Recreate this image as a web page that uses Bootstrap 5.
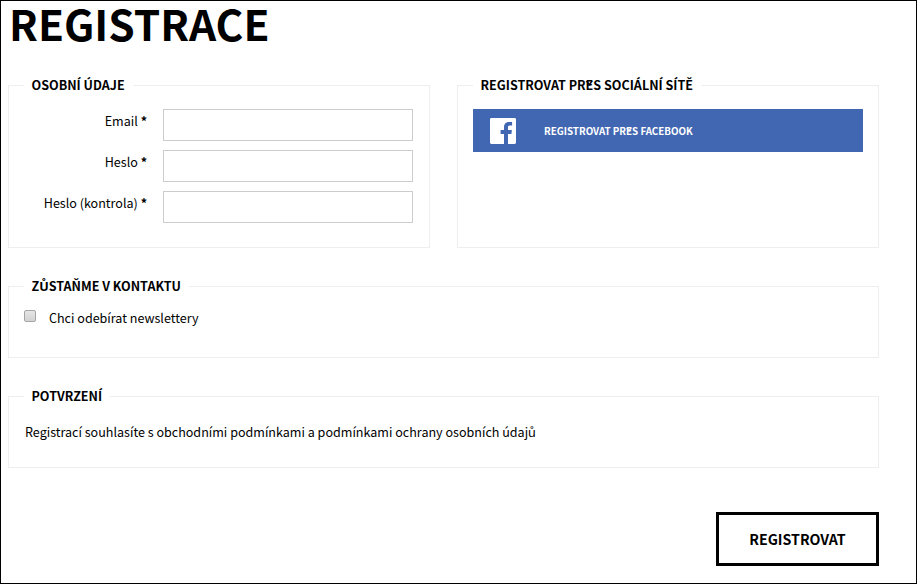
<!DOCTYPE html>
<html lang="cs">
<head>
<meta charset="utf-8">
<title>Registrace</title>
<link href="https://cdn.jsdelivr.net/npm/bootstrap@5.3.0/dist/css/bootstrap.min.css" rel="stylesheet">
<style>
html, body { height: 584px; overflow: hidden; }
body { font-family: "Noto Sans CJK SC", "Noto Sans", sans-serif; font-size: 12.55px; line-height: 20px; color: #000; background: #fff; }
.pg-frame { height: 584px; border: 1px solid #000; padding: 0 37px 0 7px; }
.pg-title { font-size: 42.4px; font-weight: 700; line-height: 43px; margin: 0 0 0 1px; height: 74px; color: #000; }
.pg-set { border: 1px solid #eee; flex: 1 1 0; min-width: 0; padding: 0 15px; }
.pg-set legend { float: none; width: auto; font-size: 12.55px; font-weight: 700; line-height: 20px; margin: 0 0 0 -.5px; padding: 0 8px; }
.pg-top { gap: 27px; height: 173px; }
.pg-row { height: 32px; margin-bottom: 9px; }
.pg-row label { width: 123px; margin-right: 16px; text-align: right; line-height: 24px; height: 24px; }
.pg-row label b { font-weight: 700; }
.pg-input { width: 250px; height: 32px; border: 1px solid #ccc; border-radius: 0; padding: 4px 8px; }
.pg-first { padding-top: 14px; }
.pg-fb { height: 43px; background: #4267b2; color: #fff; font-size: 9.8px; font-weight: 700; text-decoration: none; padding-left: 17px; margin-top: 14px; }
.pg-fb svg { width: 26px; height: 26px; margin-right: 28px; }
.pg-wide { height: 82px; margin-top: 28px; flex: none; }
.pg-check { width: 12px; height: 12px; margin: 4px 13px 0 0; border: 1px solid #a6a6a6; border-radius: 2px; background: linear-gradient(#e6e6e6, #d2d2d2); appearance: none; flex: none; }
.pg-news { padding-top: 10px; line-height: 24px; }
.pg-note { padding: 16px 0 0 1px; line-height: 20px; }
.pg-foot { margin-top: 44px; }
.pg-submit { width: 163px; height: 54px; border: 3px solid #000; border-radius: 0; background: #fff; color: #000; font-weight: 700; font-size: 14.2px; line-height: 20px; padding: 0; }
</style>
</head>
<body>
<div class="pg-frame">
  <h1 class="pg-title">REGISTRACE</h1>
  <form>
    <div class="d-flex pg-top">
      <fieldset class="pg-set">
        <legend>OSOBNÍ ÚDAJE</legend>
        <div class="pg-first">
          <div class="d-flex pg-row"><label for="em">Email <b>*</b></label><input id="em" class="pg-input" type="email"></div>
          <div class="d-flex pg-row"><label for="pw">Heslo <b>*</b></label><input id="pw" class="pg-input" type="password"></div>
          <div class="d-flex pg-row"><label for="pc">Heslo (kontrola) <b>*</b></label><input id="pc" class="pg-input" type="password"></div>
        </div>
      </fieldset>
      <fieldset class="pg-set">
        <legend>REGISTROVAT PŘES SOCIÁLNÍ SÍTĚ</legend>
        <a href="#" class="pg-fb d-flex align-items-center">
          <svg viewBox="0 0 26 26" aria-hidden="true"><path fill="#fff" d="M1.4 0h23.2C25.4 0 26 .6 26 1.4v23.2c0 .8-.6 1.4-1.4 1.4H18V16h3.4l.5-4H18V9.500c0-1.150.3-1.900 2-1.900h2.100V4.100c-.4-.05-1.600-.15-3-.15-3 0-5.100 1.800-5.100 5.200V12h-3.400v4H14v10H1.400C.6 26 0 25.400 0 24.600V1.400C0 .6.600 0 1.400 0z"/></svg>
          <span>REGISTROVAT PŘES FACEBOOK</span>
        </a>
      </fieldset>
    </div>
    <fieldset class="pg-set pg-wide">
      <legend>ZŮSTAŇME V KONTAKTU</legend>
      <div class="d-flex pg-news"><input id="nl" class="pg-check" type="checkbox"><label for="nl">Chci odebírat newslettery</label></div>
    </fieldset>
    <fieldset class="pg-set pg-wide">
      <legend>POTVRZENÍ</legend>
      <p class="pg-note m-0">Registrací souhlasíte s obchodními podmínkami a podmínkami ochrany osobních údajů</p>
    </fieldset>
    <div class="d-flex justify-content-end pg-foot"><button type="button" class="pg-submit">REGISTROVAT</button></div>
  </form>
</div>
</body>
</html>
